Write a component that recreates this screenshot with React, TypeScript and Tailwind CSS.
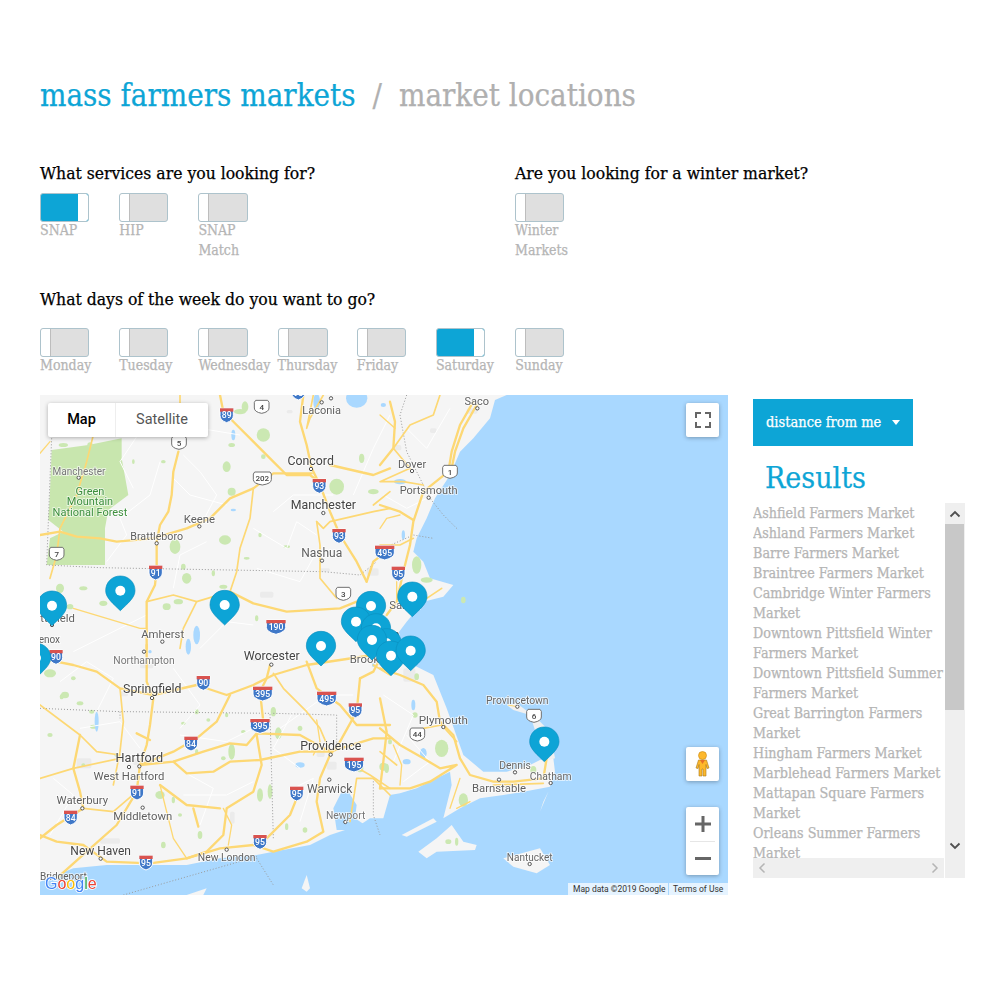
import React from "react";

const slab = "font-['DejaVu_Serif',serif] [font-stretch:condensed] [-webkit-text-stroke:0.25px]";

function Toggle({ on, w = 49 }: { on?: boolean; w?: number }) {
  return (
    <div className={`flex h-[29px] overflow-hidden rounded-[3px] border border-[#adc3cc] ${w === 50 ? "w-[50px]" : "w-[49px]"} ${on ? "flex-row bg-[#0da5d6]" : "flex-row-reverse bg-[#dfdfdf]"}`}>
      <div className="flex-1" />
      <div className={`w-[10px] bg-white ${on ? "rounded-r-[2px]" : "rounded-l-[2px] border-r border-[#bdbdbd]"}`} />
    </div>
  );
}

function Opt({ label, on, w }: { label: string; on?: boolean; w?: number }) {
  return (
    <div className="w-[79.2px] shrink-0">
      <Toggle on={on} w={w} />
      <div className="-mt-[2px] whitespace-pre text-[14px] leading-[20px] text-[#b5b5b5]">{label}</div>
    </div>
  );
}

const L = ({ d, w = 7 }: { d: string; w?: number }) => (
  <polyline points={d} fill="none" stroke="#fdd874" strokeWidth={w} strokeLinejoin="round" strokeLinecap="round" />
);
const Thin = ({ d }: { d: string }) => (
  <polyline points={d} fill="none" stroke="#ffffff" strokeWidth={3} strokeLinejoin="round" />
);

function Inter({ x, y, t }: { x: number; y: number; t: string }) {
  const wide = t.length > 2;
  const hw = wide ? 29 : 20;
  return (
    <g transform={`translate(${x},${y})`}>
      <path d={`M${-hw},-20 H${hw} V2 Q${hw},16 0,23 Q${-hw},16 ${-hw},2 Z`} fill="#3f78c8" stroke="#ffffff" strokeWidth={3} />
      <path d={`M${-hw},-20 H${hw} V-10 H${-hw} Z`} fill="#d9534f" />
      <text x={0} y={10} textAnchor="middle" fontSize={26} fontWeight={500} fill="#fff" fontFamily="Roboto, sans-serif">{t}</text>
    </g>
  );
}
function Us({ x, y, t }: { x: number; y: number; t: string }) {
  const wide = t.length > 2;
  const hw = wide ? 27 : 22;
  return (
    <g transform={`translate(${x},${y})`}>
      <path d={`M${-hw + 4},-19 H${hw - 4} L${hw},-13 V4 Q${hw},16 0,20 Q${-hw},16 ${-hw},4 V-13 Z`} fill="#fff" stroke="#707070" strokeWidth={3} />
      <text x={0} y={9} textAnchor="middle" fontSize={24} fontWeight={500} fill="#444" fontFamily="Roboto, sans-serif">{t}</text>
    </g>
  );
}
function Lbl({ x, y, t, s = 36, c = "#5f5f5f", b }: { x: number; y: number; t: string; s?: number; c?: string; b?: number }) {
  return (
    <text x={x} y={y + s * 0.35} textAnchor="middle" fontSize={s} fill={c} fontWeight={b ?? 400} fontFamily="Roboto, sans-serif" stroke="#ffffff" strokeWidth={5} strokeOpacity={0.75} paintOrder="stroke">{t}</text>
  );
}
const Dot = ({ x, y }: { x: number; y: number }) => <circle cx={x} cy={y} r={5} fill="#fff" stroke="#555" strokeWidth={3} />;

function Pin({ x, y }: { x: number; y: number }) {
  return (
    <g transform={`translate(${x},${y})`}>
      <path d="M0,-44 C25,-44 44,-25 44,0 C44,22 20,40 0,60 C-20,40 -44,22 -44,0 C-44,-25 -25,-44 0,-44 Z" fill="#0da4d6" stroke="#0b8fc0" strokeWidth={2} />
      <circle r={15} fill="#fff" />
    </g>
  );
}

const parks: [number, number, number, number][] = [
  [270, 40, 12, 10], [600, 50, 18, 8], [615, 35, 10, 16], [670, 120, 20, 20], [575, 150, 10, 6], [560, 215, 12, 16], [670, 185, 7, 7], [575, 290, 12, 12],
  [555, 435, 18, 14], [405, 455, 16, 22], [660, 420, 5, 7], [740, 455, 10, 4], [620, 490, 9, 4], [430, 515, 7, 9], [440, 550, 14, 16], [520, 535, 5, 9],
  [550, 575, 12, 6], [380, 635, 12, 10], [415, 620, 14, 8], [60, 580, 12, 14], [130, 580, 12, 6], [190, 625, 12, 8], [90, 635, 10, 8], [650, 670, 5, 9],
  [890, 275, 22, 24], [1000, 290, 16, 8], [965, 190, 8, 14], [1130, 510, 14, 26], [1160, 555, 18, 8], [1270, 615, 7, 10], [40, 50, 9, 7],
  [70, 150, 14, 6], [150, 150, 8, 8], [280, 200, 4, 7], [370, 200, 7, 5], [160, 995, 10, 6], [30, 835, 18, 12], [100, 850, 7, 6], [75, 900, 12, 10],
  [560, 960, 5, 7], [230, 1080, 7, 6], [470, 1070, 5, 8], [575, 1070, 10, 24], [550, 1090, 7, 6], [660, 1200, 9, 20], [690, 1190, 7, 22], [715, 1015, 10, 18], [700, 950, 8, 14],
  [360, 1200, 14, 12], [400, 1215, 5, 10], [480, 1320, 7, 12], [370, 1350, 7, 10], [740, 1295, 5, 10], [795, 1305, 7, 8], [960, 1120, 10, 12], [1030, 1115, 12, 12],
  [1130, 845, 7, 10], [1125, 960, 8, 8], [1040, 1120, 7, 14], [1205, 1060, 20, 26], [1270, 1215, 14, 20], [1225, 1340, 9, 7], [1250, 1340, 5, 12], [1480, 1125, 9, 12],
  [120, 925, 10, 6], [65, 905, 6, 8], [155, 950, 8, 6], [430, 985, 7, 5], [470, 950, 6, 8], [610, 1010, 7, 5], [505, 975, 6, 5], [780, 1000, 7, 8], [30, 1020, 8, 6], [130, 1110, 6, 5], [420, 1260, 6, 5], [1050, 1040, 6, 8],
];
const lakes: [number, number, number, number][] = [
  [950, 10, 32, 28], [830, 20, 10, 24], [580, 120, 6, 16], [470, 720, 10, 28], [445, 755, 8, 24], [580, 345, 8, 4], [330, 770, 5, 5], [1120, 930, 6, 16],
  [1100, 1100, 12, 8], [780, 1110, 14, 8], [1150, 1075, 10, 16], [170, 980, 6, 30], [1080, 260, 18, 8], [1090, 420, 5, 14], [1000, 810, 4, 6], [1030, 30, 8, 6],
];
const urban: [number, number, number, number][] = [
  [740, 45, 18, 10], [1170, 100, 20, 14], [1060, 150, 24, 16], [1280, 40, 32, 16], [980, 520, 36, 22], [840, 520, 30, 10], [300, 800, 40, 20], [240, 890, 24, 14],
  [660, 590, 40, 18], [630, 780, 36, 18], [280, 1090, 60, 20], [110, 1090, 44, 30], [860, 1100, 30, 24], [830, 1070, 24, 16], [1010, 730, 60, 40], [1090, 820, 36, 40], [180, 1330, 60, 16],
  [990, 790, 24, 12], [570, 1250, 14, 36],
];

const coast =
  "1400,0 1365,15 1350,70 1300,130 1260,170 1230,240 1185,310 1160,370 1130,430 1120,470 1150,500 1170,550 1240,570 1210,605 1150,620 1100,680 1070,720 1090,780 1120,810 1180,840 1220,940 1270,1080 1330,1130 1400,1130 1470,1110 1500,1095 1540,1090 1545,1130 1530,1175 1450,1190 1390,1200 1320,1210 1260,1240 1210,1270 1235,1170 1230,1130 1190,1150 1130,1180 1080,1195 1050,1200 1030,1270 990,1270 960,1290 870,1320 810,1350 700,1370 650,1380 540,1390 440,1410 340,1410 200,1410 100,1420 50,1440 0,1460 0,0";

export default function App() {
  return (
    <div className={`relative h-[1000px] w-[1000px] bg-white px-10 pt-[75px] ${slab}`}>
      <h1 className="flex h-[40px] items-center whitespace-pre text-[31px] leading-[40px]">
        <span className="text-[#0da5d6]">mass farmers markets</span>
        <span className="mx-[17px] text-[#b0b0b0]">/</span>
        <span className="text-[#b0b0b0]">market locations</span>
      </h1>

      <div className="mt-[46px] flex h-[126px]">
        <div className="w-[475px]">
          <h2 className="text-[17.4px] leading-[24px] text-black">What services are you looking for?</h2>
          <div className="mt-[8px] flex">
            <Opt label="SNAP" on />
            <Opt label="HIP" />
            <Opt label={"SNAP\nMatch"} w={50} />
          </div>
        </div>
        <div>
          <h2 className="text-[17.4px] leading-[24px] text-black">Are you looking for a winter market?</h2>
          <div className="mt-[8px] flex">
            <Opt label={"Winter\nMarkets"} />
          </div>
        </div>
      </div>

      <h2 className="text-[17.4px] leading-[24px] text-black">What days of the week do you want to go?</h2>
      <div className="mt-[17px] flex">
        <Opt label="Monday" />
        <Opt label="Tuesday" />
        <Opt label="Wednesday" w={50} />
        <Opt label="Thursday" w={50} />
        <Opt label="Friday" />
        <Opt label="Saturday" on />
        <Opt label="Sunday" />
      </div>

      <div className="mt-[20px] flex gap-[25px]">
        <div className="relative h-[500px] w-[688px] shrink-0 overflow-hidden bg-[#a9d8ff] [-webkit-text-stroke:0]">
          <svg viewBox="0 0 2064 1500" width={688} height={500} className="block blur-[0.3px] [font-stretch:normal]">
            <rect width="2064" height="1500" fill="#a9d8ff" />
            <polygon points={coast} fill="#f5f5f5" />
            <polygon points="1400,930 1430,925 1490,970 1530,1010 1545,1090 1510,1100 1490,1020 1470,960 1420,945" fill="#f0f0f0" />
            <polygon points="1135,1370 1190,1330 1235,1290 1270,1340 1310,1350 1305,1365 1190,1370 1160,1390" fill="#f5f5f5" />
            <polygon points="1390,1390 1500,1360 1530,1410 1490,1435 1420,1415" fill="#f5f5f5" />
            <polygon points="1085,1320 1180,1270 1190,1280 1100,1325" fill="#f5f5f5" />
            <polygon points="1510,1220 1525,1190 1500,1250" fill="#f5f5f5" />
            <polygon points="785,1480 800,1440 810,1480 800,1490" fill="#f5f5f5" />
            <polygon points="440,1500 500,1480 490,1500" fill="#f5f5f5" />
            <polygon points="880,1240 905,1190 925,1190 950,1230 945,1270 975,1290 955,1305 890,1305" fill="#a9d8ff" />

            {urban.map(([x, y, w, h], i) => <rect key={i} x={x} y={y} width={w} height={h} rx={5} fill="#ebebeb" />)}
            <polygon points="35,165 145,150 245,130 245,190 265,300 205,345 195,400 195,510 20,510 30,430 70,410 25,375 30,290" fill="#c8e6ae" />
            {parks.map(([x, y, w, h], i) => <ellipse key={i} cx={x} cy={y} rx={w} ry={h} fill="#cbe8b2" />)}
            {lakes.map(([x, y, w, h], i) => <ellipse key={i} cx={x} cy={y} rx={w} ry={h} fill="#a9d8ff" />)}

            <g>
              <Thin d="200,500 260,420 240,370 330,300 360,200" />
              <Thin d="480,395 530,300 480,230 430,180" />
              <Thin d="640,400 740,460 770,380 830,420" />
              <Thin d="100,770 240,700 320,660" />
              <Thin d="480,760 560,680 640,690" />
              <Thin d="720,1000 860,900 940,900" />
              <Thin d="120,1000 240,980 300,1060" />
              <Thin d="420,1020 560,1040 640,1000" />
              <Thin d="430,1200 560,1200 640,1160" />
              <Thin d="1100,100 1160,160 1230,40" />
              <Thin d="1030,300 1100,340 1180,300" />
              <Thin d="940,300 1000,160 1050,60" />
              <Thin d="240,30 300,110 240,200 280,280" />
              <Thin d="600,120 480,100 430,30" />
              <Thin d="560,330 450,300 400,250" />
              <Thin d="700,350 760,300 880,300" />
              <Thin d="650,520 780,560 830,470" />
              <Thin d="500,440 420,480 400,580" />
              <Thin d="60,860 140,800 220,850 170,950" />
              <Thin d="400,820 480,930 420,1000" />
              <Thin d="760,950 700,1060 780,1120" />
              <Thin d="40,1150 100,1200 30,1320" />
              <Thin d="430,1130 520,1180 480,1290" />
              <Thin d="760,1180 820,1150 780,1280" />
              <Thin d="1030,900 1120,960 1060,1100" />
              <Thin d="1100,1020 1170,1100 1090,1160" />
            </g>

            <g fill="none" stroke="#9a9a9a" strokeWidth={3} strokeDasharray="3 6">
              <polyline points="35,130 30,250 20,510 180,518 400,522 850,530 960,540 1010,500" />
              <polyline points="1030,460 1120,420 1180,430" />
              <polyline points="1100,0 1080,60 1100,170 1170,310 1210,360 1255,405" />
              <polyline points="0,940 240,950 260,950 690,955 700,1330" />
              <polyline points="700,955 890,960 890,1060" />
              <polyline points="1000,1150 1000,1260 1020,1320" />
              <polyline points="650,1390 700,1470" />
              <polyline points="250,1500 650,1385" />
              <polyline points="240,950 240,970" />
            </g>

            {/* top-left quarter */}
            <g>
              <L d="415,170 400,230 395,300 385,350 360,390 350,440 350,520 345,570 320,620 320,760" />
              <L d="540,0 550,50 590,90 640,140 690,190 740,240 810,240 850,270" />
              <L d="790,0 780,80 800,150 815,220 840,270 870,350 900,420 950,500 980,560" />
              <L d="0,420 60,410 110,425 180,430 230,440 340,430 440,400 510,370 570,310 640,280 700,235 815,235" />
              <L d="640,280 630,370 600,460 590,530 570,590 470,620 400,600 320,620" w={5} />
              <L d="160,120 140,200 110,300 60,400 50,480 30,550" w={5} />
              <L d="570,590 640,625 740,650 900,640 950,620" />
              <L d="470,620 430,700 420,760" w={5} />
              <L d="830,380 850,400 870,380 1000,350 1050,340" w={5} />
              <L d="830,380 840,450 840,550 890,610" w={5} />
              <L d="870,210 1000,240 1050,220" />
              <L d="1050,290 1000,330" w={5} />
              <L d="980,560 1000,500 1050,460" />
              <L d="0,175 30,140" w={4} />
              <L d="420,0 420,30 400,60" w={5} />
              <L d="100,640 200,670 300,700 320,700" w={4} />
              <L d="850,0 810,70 800,100 820,0" w={5} />
            </g>
            {/* top-right quarter */}
            <g transform="translate(1020,0)">
              <L d="280,20 240,90 215,170 205,230 130,290 100,380 90,450 70,530 50,620 20,660" />
              <L d="290,30 250,100 225,170 215,220" />
              <L d="30,20 45,80 40,160 0,210" />
              <L d="40,160 90,90 160,60 180,0" w={5} />
              <L d="40,160 90,220 0,260 70,260 130,270" w={5} />
              <L d="0,330 60,350 100,375" />
              <L d="0,450 60,450 100,430" w={5} />
              <L d="0,60 45,100" w={4} />
              <L d="140,610 185,580" w={5} />
              <L d="0,400 20,370 60,360" w={4} />
              <L d="50,560 50,620" w={4} />
            </g>
            {/* bottom-left quarter */}
            <g transform="translate(0,750)">
              <L d="0,40 100,60 170,80 240,130 340,150 470,120 560,150 640,120 700,90 800,60 1000,30" />
              <L d="320,0 320,110 340,160 330,240 320,300 300,360 290,440 230,540 140,620 50,700" />
              <L d="240,130 250,230 240,320 220,420" w={5} />
              <L d="690,60 680,100 660,140 670,230 650,270 665,360 640,440 560,490 550,570 500,620 440,640" />
              <L d="570,150 530,230 470,280 400,320 300,360" />
              <L d="300,360 400,350 490,320 570,295 620,300 650,265 780,270 870,320" />
              <L d="400,350 440,385 520,380 570,350 660,345 780,320 870,320 1000,280 1050,280" />
              <L d="360,420 440,480 540,490" />
              <L d="460,490 475,545" />
              <L d="870,320 840,250 800,200 730,130 700,85" w={5} />
              <L d="800,50 830,130 900,180 950,240 1050,240" />
              <L d="960,100 950,200 900,290 870,330 840,400 830,470 850,560 800,590 700,620 640,600 540,610 440,640 330,655 200,650 130,600 50,590 0,570" />
              <L d="770,460 750,510 680,580" />
              <L d="0,400 100,370 240,340" w={5} />
              <L d="120,270 100,370 120,440 130,490 50,540 0,580" />
              <L d="130,490 220,500 290,440" w={5} />
              <L d="0,180 120,270 170,320 240,330" w={5} />
              <L d="930,530 950,400 1000,400 1050,450" w={5} />
              <L d="920,350 990,390 1050,430" w={5} />
              <L d="1000,60 1050,90" w={5} />
              <L d="1040,0 1000,80 960,100" />
              <L d="290,265 330,285" />
              <L d="830,225 840,290 820,330" w={4} />
              <L d="360,420 400,580 440,640" w={4} />
              <L d="550,490 575,540 565,600" w={4} />
            </g>
            {/* bottom-right quarter */}
            <g transform="translate(1020,750)">
              <L d="0,70 60,90 130,120 170,170 180,230 220,270 240,340 270,390 340,410 400,410 490,400 500,340" />
              <L d="0,160 20,260 10,350 0,430" />
              <L d="0,250 60,300 130,340 180,370 230,360 150,410 90,430 0,430" />
              <L d="60,420 65,360 40,300" w={4} />
              <L d="130,250 185,240 230,290" w={5} />
              <L d="0,320 50,360" w={5} />
              <L d="240,400 210,490" w={4} />
              <L d="270,470 230,490" w={4} />
              <L d="340,420 490,415" w={5} />
              <L d="410,185 385,180" w={3} />
            </g>

            {/* shields */}
            <Inter x={560} y={60} t="89" />
            <Inter x={347} y={532} t="91" />
            <Inter x={838} y={272} t="93" />
            <Inter x={897} y={422} t="93" />
            <Inter x={1034} y={472} t="495" />
            <Inter x={708} y={695} t="190" />
            <Inter x={775} y={-8} t="93" />
            <Inter x={1075} y={535} t="95" />
            <Inter x={48} y={785} t="90" />
            <Inter x={490} y={863} t="90" />
            <Inter x={668} y={895} t="395" />
            <Inter x={660} y={992} t="395" />
            <Inter x={860} y={910} t="495" />
            <Inter x={946} y={945} t="95" />
            <Inter x={453} y={1045} t="84" />
            <Inter x={942} y={1108} t="195" />
            <Inter x={291} y={1192} t="91" />
            <Inter x={770} y={1195} t="95" />
            <Inter x={92} y={1267} t="84" />
            <Inter x={660} y={1340} t="95" />
            <Inter x={318} y={1402} t="95" />
            <Us x={417} y={143} t="5" />
            <Us x={665} y={35} t="4" />
            <Us x={667} y={250} t="202" />
            <Us x={50} y={476} t="7" />
            <Us x={910} y={596} t="3" />
            <Us x={1230} y={230} t="1" />
            <Us x={1482} y={962} t="6" />
            <Us x={1132} y={1018} t="44" />

            {/* places */}
            <Dot x={873} y={10} /><Dot x={845} y={22} /><Dot x={813} y={222} /><Dot x={116} y={248} /><Dot x={850} y={354} /><Dot x={478} y={394} /><Dot x={350} y={445} /><Dot x={846} y={497} /><Dot x={367} y={740} /><Dot x={36} y={690} />
            <Dot x={1312} y={40} /><Dot x={1116} y={228} /><Dot x={1166} y={308} /><Dot x={312} y={770} /><Dot x={694} y={809} /><Dot x={336} y={909} /><Dot x={298} y={1114} /><Dot x={267} y={1116} /><Dot x={127} y={1240} /><Dot x={308} y={1238} /><Dot x={182} y={1391} /><Dot x={560} y={1364} /><Dot x={872} y={1079} /><Dot x={868} y={1154} /><Dot x={916} y={1281} />
            <Dot x={1432} y={935} /><Dot x={1210} y={996} /><Dot x={1425} y={1132} /><Dot x={1532} y={1164} /><Dot x={1377} y={1154} /><Dot x={1469} y={1407} />

            <Lbl x={845} y={45} t="Laconia" s={33} />
            <Lbl x={812} y={198} t="Concord" s={37} c="#444" />
            <Lbl x={117} y={229} t="Manchester" s={30} c="#777" />
            <Lbl x={850} y={330} t="Manchester" s={37} c="#444" />
            <Lbl x={478} y={372} t="Keene" s={34} />
            <Lbl x={350} y={424} t="Brattleboro" s={32} />
            <Lbl x={845} y={473} t="Nashua" s={36} />
            <Lbl x={368} y={718} t="Amherst" s={34} />
            <Lbl x={150} y={287} t="Green" s={33} c="#3d8f3d" />
            <Lbl x={150} y={318} t="Mountain" s={33} c="#3d8f3d" />
            <Lbl x={150} y={350} t="National Forest" s={33} c="#3d8f3d" />
            <Lbl x={1310} y={18} t="Saco" s={33} />
            <Lbl x={1116} y={207} t="Dover" s={33} />
            <Lbl x={1166} y={286} t="Portsmouth" s={33} />
            <Lbl x={38} y={668} t="Pittsfield" s={34} />
            <Lbl x={20} y={733} t="Lenox" s={30} />
            <Lbl x={1095} y={630} t="Salem" s={34} />
            <Lbl x={1018} y={720} t="Boston" s={38} c="#222" b={500} />
            <Lbl x={1000} y={792} t="Brookline" s={34} />
            <Lbl x={312} y={795} t="Northampton" s={31} c="#777" />
            <Lbl x={695} y={783} t="Worcester" s={37} c="#444" />
            <Lbl x={337} y={882} t="Springfield" s={37} c="#444" />
            <Lbl x={298} y={1087} t="Hartford" s={38} c="#444" />
            <Lbl x={267} y={1142} t="West Hartford" s={34} />
            <Lbl x={127} y={1216} t="Waterbury" s={34} />
            <Lbl x={308} y={1263} t="Middletown" s={34} />
            <Lbl x={182} y={1366} t="New Haven" s={36} c="#444" />
            <Lbl x={70} y={1445} t="Bridgeport" s={30} />
            <Lbl x={560} y={1387} t="New London" s={31} />
            <Lbl x={872} y={1052} t="Providence" s={37} c="#444" />
            <Lbl x={869} y={1180} t="Warwick" s={36} />
            <Lbl x={917} y={1260} t="Newport" s={31} c="#777" />
            <Lbl x={1432} y={915} t="Provincetown" s={31} c="#666" />
            <Lbl x={1210} y={975} t="Plymouth" s={35} />
            <Lbl x={1425} y={1112} t="Dennis" s={31} c="#666" />
            <Lbl x={1532} y={1145} t="Chatham" s={31} c="#666" />
            <Lbl x={1377} y={1178} t="Barnstable" s={34} />
            <Lbl x={1469} y={1387} t="Nantucket" s={30} c="#666" />

            <Pin x={36} y={632} />
            <Pin x={-12} y={789} />
            <Pin x={241} y={587} />
            <Pin x={554} y={630} />
            <Pin x={843} y={753} />
            <Pin x={993} y={633} />
            <Pin x={948} y={680} />
            <Pin x={1008} y={700} />
            <Pin x={1117} y={605} />
            <Pin x={1040} y={745} />
            <Pin x={996} y={735} />
            <Pin x={1053} y={782} />
            <Pin x={1112} y={767} />
            <Pin x={1513} y={1040} />
            <text x={15} y={1482} fontSize={48} fontWeight={500} fontFamily="'Liberation Sans', sans-serif" stroke="#ffffff" strokeWidth={5} paintOrder="stroke">
              <tspan fill="#4285f4">G</tspan><tspan fill="#ea4335">o</tspan><tspan fill="#fbbc05">o</tspan><tspan fill="#4285f4">g</tspan><tspan fill="#34a853">l</tspan><tspan fill="#ea4335">e</tspan>
            </text>
          </svg>

          <div className="absolute left-[8px] top-[8px] flex h-[34px] w-[160px] rounded-[2px] bg-white font-['Roboto',sans-serif] text-[14.5px] leading-[34px] [font-stretch:normal] shadow-[0_1px_4px_rgba(0,0,0,0.3)]">
            <div className="w-[68px] border-r border-[#eeeeee] text-center font-medium text-black">Map</div>
            <div className="flex-1 text-center text-[#565656]">Satellite</div>
          </div>
          <div className="absolute left-[646px] top-[8px] flex h-[34px] w-[33px] items-center justify-center rounded-[2px] bg-white shadow-[0_1px_4px_rgba(0,0,0,0.3)]">
            <svg width="16" height="16" viewBox="0 0 16 16" fill="none" stroke="#666" strokeWidth="2"><path d="M1 6V1H6M10 1H15V6M15 10V15H10M6 15H1V10" /></svg>
          </div>
          <div className="absolute left-[646px] top-[352px] flex h-[34px] w-[33px] items-center justify-center rounded-[2px] bg-white shadow-[0_1px_4px_rgba(0,0,0,0.3)]">
            <svg width="15" height="26" viewBox="0 0 15 26">
              <circle cx="7.5" cy="4.5" r="4" fill="#fdb82c" stroke="#c98a12" strokeWidth="0.6" />
              <path d="M3.5 9 H11.5 L14 17 L12 17.5 L11 13.5 V25 H8 V18 H7 V25 H4 V13.5 L3 17.5 L1 17 Z" fill="#fdb82c" stroke="#a87a20" strokeWidth="0.6" />
              <path d="M5 9 L7.5 13 L10 9" fill="#e5702a" />
            </svg>
          </div>
          <div className="absolute left-[646px] top-[412px] flex h-[68px] w-[33px] flex-col items-center rounded-[2px] bg-white shadow-[0_1px_4px_rgba(0,0,0,0.3)]">
            <div className="flex h-[34px] w-full items-center justify-center">
              <svg width="16" height="16" viewBox="0 0 16 16" fill="#666"><path d="M6.5 0h3v6.5H16v3H9.5V16h-3V9.5H0v-3h6.5z" /></svg>
            </div>
            <div className="h-px w-[25px] bg-[#e6e6e6]" />
            <div className="flex h-[33px] w-full items-center justify-center">
              <svg width="16" height="4" viewBox="0 0 16 4" fill="#666"><rect width="16" height="3" /></svg>
            </div>
          </div>
          <div className="absolute bottom-0 right-0 flex h-[12px] gap-px whitespace-nowrap font-['Roboto',sans-serif] text-[8.5px] leading-[13px] text-[#333] [font-stretch:normal]">
            <div className="w-[100px] bg-white/70 pl-[5px]">Map data ©2019 Google</div>
            <div className="w-[59px] bg-white/70 pl-[4px]">Terms of Use</div>
          </div>
        </div>

        <div className="w-[212px] shrink-0">
          <div className="mt-[4px] flex h-[47px] w-[160px] items-center bg-[#0da5d6] pl-[13px] text-[14.5px] text-white">
            <span className="flex-1">distance from me</span>
            <svg width="8" height="5" viewBox="0 0 8 5" className="mr-[13px] shrink-0"><path d="M0 0h8L4 5z" fill="#fff" /></svg>
          </div>
          <div className="mt-[13px] pl-[12px] text-[30px] leading-[38px] text-[#0da5d6]">Results</div>
          <div className="relative mt-[6px] h-[375px] w-[212px]">
            <div className="h-[355px] w-[192px] overflow-hidden whitespace-pre text-[14.2px] leading-[20px] text-[#b5b5b5]">
              {[
                "Ashfield Farmers Market",
                "Ashland Farmers Market",
                "Barre Farmers Market",
                "Braintree Farmers Market",
                "Cambridge Winter Farmers\nMarket",
                "Downtown Pittsfield Winter\nFarmers Market",
                "Downtown Pittsfield Summer\nFarmers Market",
                "Great Barrington Farmers\nMarket",
                "Hingham Farmers Market",
                "Marblehead Farmers Market",
                "Mattapan Square Farmers\nMarket",
                "Orleans Summer Farmers\nMarket",
              ].map((m) => <div key={m}>{m}</div>)}
            </div>
            <div className="absolute bottom-0 left-0 flex h-[20px] w-[191px] items-center justify-between bg-[#efefef] px-[5px]">
              <svg width="8" height="12" viewBox="0 0 8 12" fill="none" stroke="#b5b5b5" strokeWidth="1.5"><path d="M6.5 1.5L2 6l4.5 4.5" /></svg>
              <svg width="8" height="12" viewBox="0 0 8 12" fill="none" stroke="#b5b5b5" strokeWidth="1.5"><path d="M1.5 1.5L6 6l-4.5 4.5" /></svg>
            </div>
            <div className="absolute bottom-0 right-0 top-0 w-[20px] bg-[#efefef]">
              <div className="flex h-[21px] items-center justify-center">
                <svg width="12" height="8" viewBox="0 0 12 8" fill="none" stroke="#505050" strokeWidth="1.8"><path d="M1.5 6.5L6 2l4.5 4.5" /></svg>
              </div>
              <div className="h-[186px] w-[19px] bg-[#c8c8c8]" />
              <div className="mt-[132px] flex h-[8px] items-center justify-center">
                <svg width="12" height="8" viewBox="0 0 12 8" fill="none" stroke="#505050" strokeWidth="1.8"><path d="M1.5 1.5L6 6l4.5-4.5" /></svg>
              </div>
            </div>
          </div>
        </div>
      </div>
    </div>
  );
}
